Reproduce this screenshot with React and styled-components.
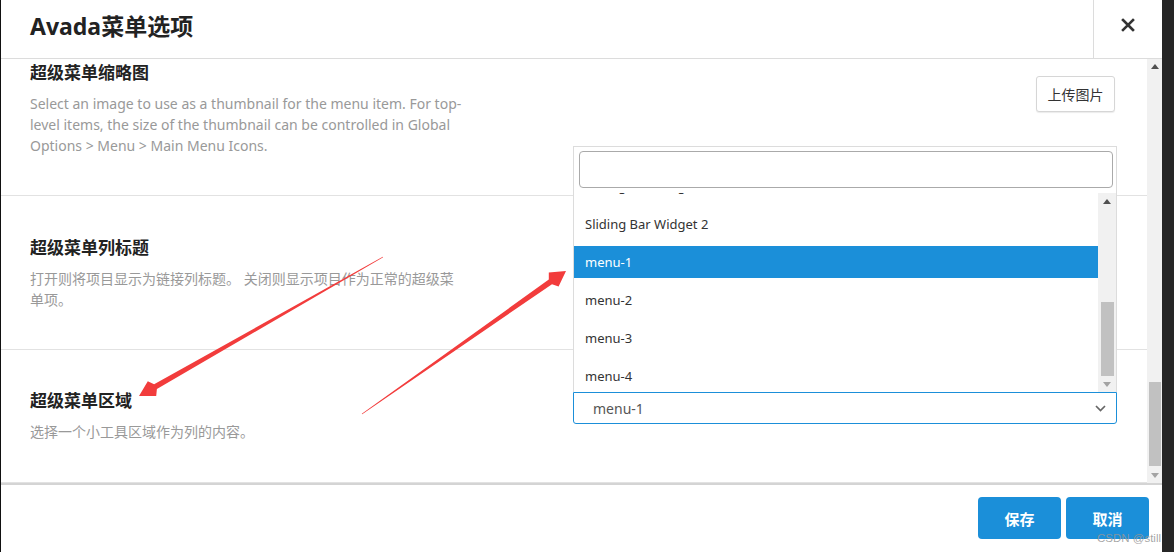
import React from 'react';
import styled, { createGlobalStyle } from 'styled-components';

const Global = createGlobalStyle`
  html, body { margin: 0; padding: 0; background: #262626; }
  body { font-family: "Noto Sans", "Noto Sans CJK SC", sans-serif; color: #333; }
  * { box-sizing: border-box; }
`;

const Page = styled.div`
  position: relative;
  width: 1174px;
  height: 552px;
  display: flex;
  background: #262626;
  overflow: hidden;
`;

const Modal = styled.div`
  width: 1162px;
  height: 552px;
  display: flex;
  flex-direction: column;
  background: #fff;
  border-left: 1px solid #111;
`;

const Header = styled.header`
  height: 59px;
  flex: none;
  display: flex;
  border-bottom: 1px solid #dcdcdc;
`;

const ModalTitle = styled.h1`
  flex: 1;
  margin: 0;
  padding: 0 0 9px 29px;
  display: flex;
  align-items: center;
  font-size: 23px;
  font-weight: 700;
  color: #222;
  font-family: "Noto Sans", "Noto Sans CJK SC", sans-serif;
`;

const CloseBox = styled.div`
  width: 69px;
  border-left: 1px solid #dcdcdc;
  display: flex;
  align-items: center;
  justify-content: center;
  padding-bottom: 9px;
`;

const Body = styled.div`
  flex: 1;
  min-height: 0;
  display: flex;
`;

const Content = styled.div`
  flex: 1;
  overflow: hidden;
  position: relative;
`;

const Section = styled.section`
  padding: ${p => p.$pt}px 30px ${p => p.$pb}px 29px;
  border-bottom: 1px solid #e2e2e2;
`;

const Row = styled.div`
  display: flex;
  justify-content: space-between;
  align-items: flex-start;
`;

const Info = styled.div`
  width: 437px;
`;

const FieldTitle = styled.h3`
  margin: 0 0 9px;
  font-size: 17px;
  line-height: 22px;
  font-weight: 700;
  color: #222;
`;

const Desc = styled.p`
  margin: 0;
  font-size: 14px;
  line-height: 21px;
  color: #999;
`;

const Field = styled.div`
  width: 544px;
  position: relative;
  display: flex;
  justify-content: flex-end;
`;

const UploadButton = styled.button`
  margin-top: 14px;
  margin-right: 2px;
  width: 79px;
  height: 36px;
  padding: 0;
  background: #fff;
  border: 1px solid #d6d6d6;
  border-radius: 3px;
  box-shadow: 0 1px 1px rgba(0, 0, 0, 0.08);
  font-family: "Noto Sans", "Noto Sans CJK SC", sans-serif;
  font-size: 14px;
  color: #333;
`;

const Select = styled.div`
  margin-top: 2px;
  width: 100%;
  height: 32px;
  border: 1px solid #1b8fd9;
  border-radius: 0 0 3px 3px;
  padding: 0 10px 0 19px;
  display: flex;
  align-items: center;
  justify-content: space-between;
  font-size: 14px;
  color: #555;
`;

const Dropdown = styled.div`
  position: absolute;
  left: 0;
  right: 0;
  bottom: calc(100% - 2px);
  height: 246px;
  background: #fff;
  border: 1px solid #dcdcdc;
  border-bottom: none;
  display: flex;
  flex-direction: column;
  z-index: 5;
`;

const SearchArea = styled.div`
  padding: 4px 3px 5px 5px;
  flex: none;
`;

const SearchInput = styled.div`
  height: 37px;
  border: 1px solid #aaa;
  border-radius: 4px;
  background: #fff;
`;

const List = styled.div`
  flex: 1;
  min-height: 0;
  display: flex;
`;

const Items = styled.div`
  flex: 1;
  overflow: hidden;
`;

const ItemsInner = styled.div`
  margin-top: -23px;
`;

const Item = styled.div`
  height: 32px;
  margin-bottom: 6px;
  padding-left: 11px;
  line-height: 32px;
  font-size: 13px;
  color: ${p => (p.$active ? '#fff' : '#333')};
  background: ${p => (p.$active ? '#1b8fd9' : 'transparent')};
  &:first-child { margin-bottom: 6px; }
`;

const ScrollBar = styled.div`
  width: ${p => p.$w}px;
  flex: none;
  background: #f1f1f1;
  display: flex;
  flex-direction: column;
  align-items: center;
`;

const ScrollArrow = styled.div`
  height: ${p => p.$h}px;
  width: 100%;
  flex: none;
  display: flex;
  align-items: center;
  justify-content: center;
`;

const ScrollTrack = styled.div`
  flex: 1;
  width: 100%;
  display: flex;
  flex-direction: column;
  align-items: center;
`;

const Thumb = styled.div`
  width: ${p => p.$w}px;
  height: ${p => p.$h}px;
  margin-top: ${p => p.$top}px;
  background: #c1c1c1;
`;

const Footer = styled.footer`
  height: 69px;
  flex: none;
  border-top: 2px solid #d4d4d4;
  display: flex;
  justify-content: flex-end;
  align-items: flex-start;
  gap: 5px;
  padding: 12px 13px 0 0;
`;

const ActionButton = styled.button`
  width: 83px;
  height: 42px;
  border: 0;
  border-radius: 4px;
  background: #1b8fd9;
  color: #fff;
  font-family: "Noto Sans", "Noto Sans CJK SC", sans-serif;
  font-size: 15px;
  font-weight: 700;
  padding: 0;
`;

const Overlay = styled.svg`
  position: absolute;
  left: 0;
  top: 0;
  pointer-events: none;
  z-index: 20;
`;

const Watermark = styled.div`
  position: absolute;
  right: 13px;
  bottom: 8px;
  font-family: "Liberation Sans", sans-serif;
  font-size: 11.5px;
  color: rgba(150, 150, 150, 0.85);
  z-index: 21;
`;

const Tri = ({ up, color }) => (
  <svg width="8" height="5" viewBox="0 0 8 5">
    <polygon points={up ? '0,5 8,5 4,0' : '0,0 8,0 4,5'} fill={color} />
  </svg>
);

function arrowPoints(tx, ty, px, py) {
  const dx = px - tx;
  const dy = py - ty;
  const len = Math.hypot(dx, dy);
  const ux = dx / len;
  const uy = dy / len;
  const nx = -uy;
  const ny = ux;
  const pt = (a, b) => `${(px - ux * a + nx * b).toFixed(1)},${(py - uy * a + ny * b).toFixed(1)}`;
  return [
    pt(0, 0),
    pt(15, 8.5),
    pt(19, 2.8),
    pt(len, 0.4),
    pt(len, -0.4),
    pt(19, -2.8),
    pt(15, -8.5),
  ].join(' ');
}

export default function App() {
  return (
    <>
      <Global />
      <Page>
        <Modal>
          <Header>
            <ModalTitle>Avada菜单选项</ModalTitle>
            <CloseBox>
              <svg width="14" height="14" viewBox="0 0 14 14">
                <path d="M2 2 L12 12 M12 2 L2 12" stroke="#333" strokeWidth="2.6" strokeLinecap="square" />
              </svg>
            </CloseBox>
          </Header>
          <Body>
            <Content>
              <Section $pt={3} $pb={39}>
                <Row>
                  <Info>
                    <FieldTitle>超级菜单缩略图</FieldTitle>
                    <Desc>
                      Select an image to use as a thumbnail for the menu item. For top-level items, the size of the thumbnail can be controlled in Global Options &gt; Menu &gt; Main Menu Icons.
                    </Desc>
                  </Info>
                  <Field>
                    <UploadButton>上传图片</UploadButton>
                  </Field>
                </Row>
              </Section>
              <Section $pt={41} $pb={39}>
                <Row>
                  <Info>
                    <FieldTitle>超级菜单列标题</FieldTitle>
                    <Desc>打开则将项目显示为链接列标题。 关闭则显示项目作为正常的超级菜单项。</Desc>
                  </Info>
                </Row>
              </Section>
              <Section $pt={40} $pb={40}>
                <Row>
                  <Info>
                    <FieldTitle>超级菜单区域</FieldTitle>
                    <Desc>选择一个小工具区域作为列的内容。</Desc>
                  </Info>
                  <Field>
                    <Dropdown>
                      <SearchArea>
                        <SearchInput />
                      </SearchArea>
                      <List>
                        <Items>
                          <ItemsInner>
                            <Item>Sliding Bar Widget 1</Item>
                            <Item>Sliding Bar Widget 2</Item>
                            <Item $active>menu-1</Item>
                            <Item>menu-2</Item>
                            <Item>menu-3</Item>
                            <Item>menu-4</Item>
                          </ItemsInner>
                        </Items>
                        <ScrollBar $w={18}>
                          <ScrollArrow $h={17}><Tri up color="#505050" /></ScrollArrow>
                          <ScrollTrack>
                            <Thumb $w={13} $h={74} $top={92} />
                          </ScrollTrack>
                          <ScrollArrow $h={17}><Tri color="#a3a3a3" /></ScrollArrow>
                        </ScrollBar>
                      </List>
                    </Dropdown>
                    <Select>
                      <span>menu-1</span>
                      <svg width="11" height="7" viewBox="0 0 11 7">
                        <polyline points="1,1 5.5,5.5 10,1" fill="none" stroke="#666" strokeWidth="1.7" />
                      </svg>
                    </Select>
                  </Field>
                </Row>
              </Section>
            </Content>
            <ScrollBar $w={15}>
              <ScrollArrow $h={15}><Tri up color="#505050" /></ScrollArrow>
              <ScrollTrack>
                <Thumb $w={12} $h={84} $top={308} />
              </ScrollTrack>
              <ScrollArrow $h={15}><Tri color="#a3a3a3" /></ScrollArrow>
            </ScrollBar>
          </Body>
          <Footer>
            <ActionButton>保存</ActionButton>
            <ActionButton>取消</ActionButton>
          </Footer>
        </Modal>
        <Overlay width="1174" height="552" viewBox="0 0 1174 552">
          <polygon points={arrowPoints(383, 257, 139, 396)} fill="#f23c3c" />
          <polygon points={arrowPoints(362, 414, 566, 271)} fill="#f23c3c" />
        </Overlay>
        <Watermark>CSDN @still</Watermark>
      </Page>
    </>
  );
}
